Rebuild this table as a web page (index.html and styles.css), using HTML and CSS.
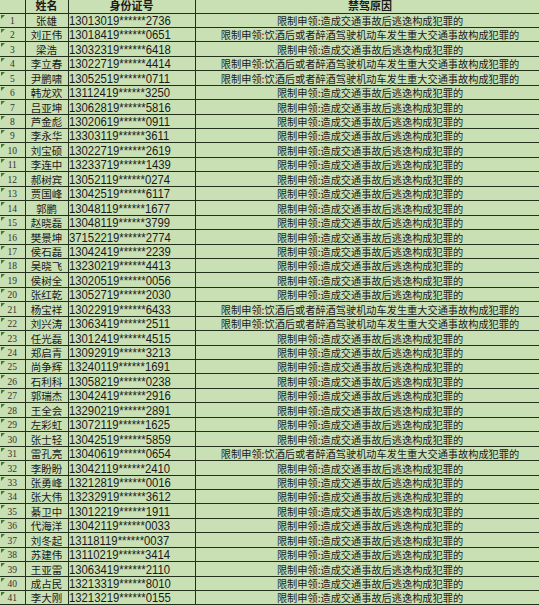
FILE: index.html
```html
<!DOCTYPE html>
<html lang="zh-CN">
<head>
<meta charset="utf-8">
<title>禁驾名单</title>
<link rel="stylesheet" href="styles.css">
</head>
<body>
<table class="sheet">
<colgroup><col class="c-no"><col class="c-name"><col class="c-id"><col class="c-reason"></colgroup>
<thead>
<tr class="head"><th></th><th>姓名</th><th>身份证号</th><th>禁驾原因</th></tr>
</thead>
<tbody id="rows">
<tr><td class="no">1</td><td class="name">张雄</td><td class="id"><span>13013019******2736</span></td><td class="reason">限制申领:造成交通事故后逃逸构成犯罪的</td></tr>
<tr><td class="no">2</td><td class="name">刘正伟</td><td class="id"><span>13018419******0651</span></td><td class="reason">限制申领:饮酒后或者醉酒驾驶机动车发生重大交通事故构成犯罪的</td></tr>
<tr><td class="no">3</td><td class="name">梁浩</td><td class="id"><span>13032319******6418</span></td><td class="reason">限制申领:造成交通事故后逃逸构成犯罪的</td></tr>
<tr><td class="no">4</td><td class="name">李立春</td><td class="id"><span>13022719******4414</span></td><td class="reason">限制申领:饮酒后或者醉酒驾驶机动车发生重大交通事故构成犯罪的</td></tr>
<tr><td class="no">5</td><td class="name">尹鹏啸</td><td class="id"><span>13052519******0711</span></td><td class="reason">限制申领:饮酒后或者醉酒驾驶机动车发生重大交通事故构成犯罪的</td></tr>
<tr><td class="no">6</td><td class="name">韩龙欢</td><td class="id"><span>13112419******3250</span></td><td class="reason">限制申领:造成交通事故后逃逸构成犯罪的</td></tr>
<tr><td class="no">7</td><td class="name">吕亚坤</td><td class="id"><span>13062819******5816</span></td><td class="reason">限制申领:造成交通事故后逃逸构成犯罪的</td></tr>
<tr><td class="no">8</td><td class="name">芦金彪</td><td class="id"><span>13020619******0911</span></td><td class="reason">限制申领:造成交通事故后逃逸构成犯罪的</td></tr>
<tr><td class="no">9</td><td class="name">李永华</td><td class="id"><span>13303119******3611</span></td><td class="reason">限制申领:造成交通事故后逃逸构成犯罪的</td></tr>
<tr><td class="no">10</td><td class="name">刘宝硕</td><td class="id"><span>13022719******2619</span></td><td class="reason">限制申领:造成交通事故后逃逸构成犯罪的</td></tr>
<tr><td class="no">11</td><td class="name">李连中</td><td class="id"><span>13233719******1439</span></td><td class="reason">限制申领:造成交通事故后逃逸构成犯罪的</td></tr>
<tr><td class="no">12</td><td class="name">郝树宾</td><td class="id"><span>13052119******0274</span></td><td class="reason">限制申领:造成交通事故后逃逸构成犯罪的</td></tr>
<tr><td class="no">13</td><td class="name">贾国峰</td><td class="id"><span>13042519******6117</span></td><td class="reason">限制申领:造成交通事故后逃逸构成犯罪的</td></tr>
<tr><td class="no">14</td><td class="name">郭鹏</td><td class="id"><span>13048119******1677</span></td><td class="reason">限制申领:造成交通事故后逃逸构成犯罪的</td></tr>
<tr><td class="no">15</td><td class="name">赵晓磊</td><td class="id"><span>13048119******3799</span></td><td class="reason">限制申领:造成交通事故后逃逸构成犯罪的</td></tr>
<tr><td class="no">16</td><td class="name">樊景坤</td><td class="id"><span>37152219******2774</span></td><td class="reason">限制申领:造成交通事故后逃逸构成犯罪的</td></tr>
<tr><td class="no">17</td><td class="name">侯石磊</td><td class="id"><span>13042419******2239</span></td><td class="reason">限制申领:造成交通事故后逃逸构成犯罪的</td></tr>
<tr><td class="no">18</td><td class="name">吴晓飞</td><td class="id"><span>13230219******4413</span></td><td class="reason">限制申领:造成交通事故后逃逸构成犯罪的</td></tr>
<tr><td class="no">19</td><td class="name">侯树全</td><td class="id"><span>13020519******0056</span></td><td class="reason">限制申领:造成交通事故后逃逸构成犯罪的</td></tr>
<tr><td class="no">20</td><td class="name">张红乾</td><td class="id"><span>13052719******2030</span></td><td class="reason">限制申领:造成交通事故后逃逸构成犯罪的</td></tr>
<tr><td class="no">21</td><td class="name">杨宝祥</td><td class="id"><span>13022919******6433</span></td><td class="reason">限制申领:饮酒后或者醉酒驾驶机动车发生重大交通事故构成犯罪的</td></tr>
<tr><td class="no">22</td><td class="name">刘兴涛</td><td class="id"><span>13063419******2511</span></td><td class="reason">限制申领:饮酒后或者醉酒驾驶机动车发生重大交通事故构成犯罪的</td></tr>
<tr><td class="no">23</td><td class="name">任光磊</td><td class="id"><span>13012419******4515</span></td><td class="reason">限制申领:造成交通事故后逃逸构成犯罪的</td></tr>
<tr><td class="no">24</td><td class="name">郑启青</td><td class="id"><span>13092919******3213</span></td><td class="reason">限制申领:造成交通事故后逃逸构成犯罪的</td></tr>
<tr><td class="no">25</td><td class="name">尚争辉</td><td class="id"><span>13240119******1691</span></td><td class="reason">限制申领:造成交通事故后逃逸构成犯罪的</td></tr>
<tr><td class="no">26</td><td class="name">石利科</td><td class="id"><span>13058219******0238</span></td><td class="reason">限制申领:造成交通事故后逃逸构成犯罪的</td></tr>
<tr><td class="no">27</td><td class="name">郭瑞杰</td><td class="id"><span>13042419******2916</span></td><td class="reason">限制申领:造成交通事故后逃逸构成犯罪的</td></tr>
<tr><td class="no">28</td><td class="name">王全会</td><td class="id"><span>13290219******2891</span></td><td class="reason">限制申领:造成交通事故后逃逸构成犯罪的</td></tr>
<tr><td class="no">29</td><td class="name">左彩虹</td><td class="id"><span>13072119******1625</span></td><td class="reason">限制申领:造成交通事故后逃逸构成犯罪的</td></tr>
<tr><td class="no">30</td><td class="name">张士轻</td><td class="id"><span>13042519******5859</span></td><td class="reason">限制申领:造成交通事故后逃逸构成犯罪的</td></tr>
<tr><td class="no">31</td><td class="name">雷孔亮</td><td class="id"><span>13040619******0654</span></td><td class="reason">限制申领:饮酒后或者醉酒驾驶机动车发生重大交通事故构成犯罪的</td></tr>
<tr><td class="no">32</td><td class="name">李盼盼</td><td class="id"><span>13042119******2410</span></td><td class="reason">限制申领:造成交通事故后逃逸构成犯罪的</td></tr>
<tr><td class="no">33</td><td class="name">张勇峰</td><td class="id"><span>13212819******0016</span></td><td class="reason">限制申领:造成交通事故后逃逸构成犯罪的</td></tr>
<tr><td class="no">34</td><td class="name">张大伟</td><td class="id"><span>13232919******3612</span></td><td class="reason">限制申领:造成交通事故后逃逸构成犯罪的</td></tr>
<tr><td class="no">35</td><td class="name">綦卫中</td><td class="id"><span>13012219******1911</span></td><td class="reason">限制申领:造成交通事故后逃逸构成犯罪的</td></tr>
<tr><td class="no">36</td><td class="name">代海洋</td><td class="id"><span>13042119******0033</span></td><td class="reason">限制申领:造成交通事故后逃逸构成犯罪的</td></tr>
<tr><td class="no">37</td><td class="name">刘冬起</td><td class="id"><span>13118119******0037</span></td><td class="reason">限制申领:造成交通事故后逃逸构成犯罪的</td></tr>
<tr><td class="no">38</td><td class="name">苏建伟</td><td class="id"><span>13110219******3414</span></td><td class="reason">限制申领:造成交通事故后逃逸构成犯罪的</td></tr>
<tr><td class="no">39</td><td class="name">王亚雷</td><td class="id"><span>13063419******2110</span></td><td class="reason">限制申领:造成交通事故后逃逸构成犯罪的</td></tr>
<tr><td class="no">40</td><td class="name">成占民</td><td class="id"><span>13213319******8010</span></td><td class="reason">限制申领:造成交通事故后逃逸构成犯罪的</td></tr>
<tr><td class="no">41</td><td class="name">李大刚</td><td class="id"><span>13213219******0155</span></td><td class="reason">限制申领:造成交通事故后逃逸构成犯罪的</td></tr>
</tbody>
</table>
</body>
</html>
```
FILE: styles.css
```css
html, body {
  margin: 0;
  padding: 0;
  background: #c9e0b5;
  overflow: hidden;
}
body {
  width: 539px;
  height: 606px;
  color: #1a1a1a;
  font-family: "Noto Sans CJK SC", "Liberation Sans", sans-serif;
}
.sheet {
  width: 545px;
  table-layout: fixed;
  border-collapse: collapse;
  border-spacing: 0;
}
.c-no { width: 25px; }
.c-name { width: 43px; }
.c-id { width: 127px; }
.c-reason { width: 350px; }

.sheet th,
.sheet td {
  padding: 0;
  border: 1px solid #23301c;
  white-space: nowrap;
  overflow: hidden;
  vertical-align: bottom;
}
.sheet thead th {
  border-top: none;
  overflow: visible;
  vertical-align: top;
}
.sheet th:first-child,
.sheet td:first-child {
  border-left: none;
}
.head {
  height: 13px;
}
.head th {
  font-family: "Liberation Sans", "Noto Sans CJK SC", sans-serif;
  font-size: 11px;
  font-weight: bold;
  line-height: 12.5px;
  text-align: center;
}
tbody tr {
  height: 14.45px;
}
.no {
  position: relative;
  font-family: "Liberation Serif", serif;
  font-size: 9.5px;
  line-height: 11px;
  text-align: center;
  color: #333;
}
.no::before {
  content: "";
  position: absolute;
  left: 1px;
  top: 1px;
  border-top: 4px solid #3d7a2a;
  border-right: 4px solid transparent;
}
.name {
  font-size: 10.5px;
  line-height: 12px;
  text-align: center;
}
.id {
  font-family: "Liberation Sans", Arial, sans-serif;
  font-size: 13px;
  line-height: 13px;
  padding-left: 3px;
}
.id span {
  display: inline-block;
  transform: scaleX(0.87);
  transform-origin: left bottom;
}
.reason {
  font-size: 10.2px;
  line-height: 12px;
  text-align: center;
}
```
